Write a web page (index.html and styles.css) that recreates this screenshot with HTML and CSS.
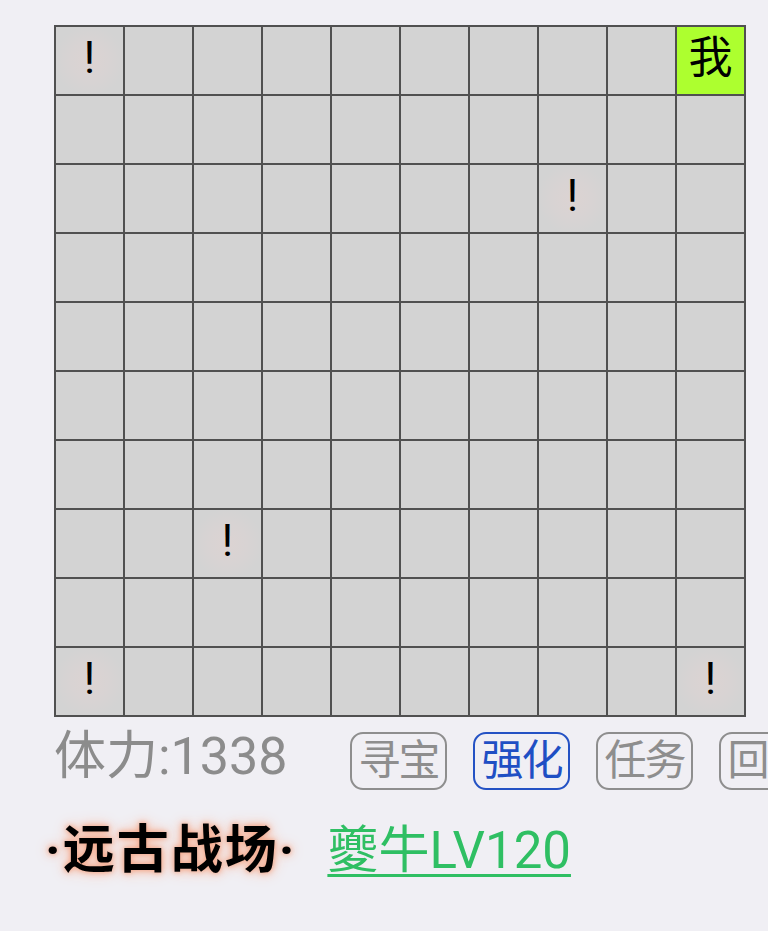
FILE: index.html
```html
<!DOCTYPE html>
<html lang="zh">
<head>
<meta charset="utf-8">
<title>远古战场</title>
<link rel="stylesheet" href="styles.css">
</head>
<body>
<div class="page">
  <div class="board">
    <div class="cell mark">!</div><div class="cell"></div><div class="cell"></div><div class="cell"></div><div class="cell"></div><div class="cell"></div><div class="cell"></div><div class="cell"></div><div class="cell"></div><div class="cell me">我</div>
    <div class="cell"></div><div class="cell"></div><div class="cell"></div><div class="cell"></div><div class="cell"></div><div class="cell"></div><div class="cell"></div><div class="cell"></div><div class="cell"></div><div class="cell"></div>
    <div class="cell"></div><div class="cell"></div><div class="cell"></div><div class="cell"></div><div class="cell"></div><div class="cell"></div><div class="cell"></div><div class="cell mark">!</div><div class="cell"></div><div class="cell"></div>
    <div class="cell"></div><div class="cell"></div><div class="cell"></div><div class="cell"></div><div class="cell"></div><div class="cell"></div><div class="cell"></div><div class="cell"></div><div class="cell"></div><div class="cell"></div>
    <div class="cell"></div><div class="cell"></div><div class="cell"></div><div class="cell"></div><div class="cell"></div><div class="cell"></div><div class="cell"></div><div class="cell"></div><div class="cell"></div><div class="cell"></div>
    <div class="cell"></div><div class="cell"></div><div class="cell"></div><div class="cell"></div><div class="cell"></div><div class="cell"></div><div class="cell"></div><div class="cell"></div><div class="cell"></div><div class="cell"></div>
    <div class="cell"></div><div class="cell"></div><div class="cell"></div><div class="cell"></div><div class="cell"></div><div class="cell"></div><div class="cell"></div><div class="cell"></div><div class="cell"></div><div class="cell"></div>
    <div class="cell"></div><div class="cell"></div><div class="cell mark">!</div><div class="cell"></div><div class="cell"></div><div class="cell"></div><div class="cell"></div><div class="cell"></div><div class="cell"></div><div class="cell"></div>
    <div class="cell"></div><div class="cell"></div><div class="cell"></div><div class="cell"></div><div class="cell"></div><div class="cell"></div><div class="cell"></div><div class="cell"></div><div class="cell"></div><div class="cell"></div>
    <div class="cell mark">!</div><div class="cell"></div><div class="cell"></div><div class="cell"></div><div class="cell"></div><div class="cell"></div><div class="cell"></div><div class="cell"></div><div class="cell"></div><div class="cell mark">!</div>
  </div>

  <div class="status">
    <span class="stamina">体力:1338</span>
    <div class="actions">
      <span class="btn">寻宝</span>
      <span class="btn active">强化</span>
      <span class="btn">任务</span>
      <span class="btn">回城</span>
    </div>
  </div>

  <div class="title-row">
    <span class="place">·远古战场·</span>
    <a class="boss" href="#">夔牛LV120</a>
  </div>
</div>
</body>
</html>
```

FILE: styles.css
```css
html, body {
  margin: 0;
  padding: 0;
  overflow: hidden;
  background: #f0eff4;
}

body {
  font-family: Roboto, "Noto Sans CJK SC", sans-serif;
  width: 768px;
  height: 931px;
}

.page {
  padding: 25px 0 0 54px;
}

.board {
  display: grid;
  grid-template-columns: repeat(10, 67px);
  grid-auto-rows: 67px;
  gap: 2px;
  padding: 2px;
  width: max-content;
  background: #505050;
}

.cell {
  box-sizing: border-box;
  background: #d3d3d3;
  display: flex;
  align-items: center;
  justify-content: center;
  padding-bottom: 6px;
  font-size: 44px;
  line-height: 1;
  color: #000;
}

.cell.mark {
  background: radial-gradient(circle at 50% 50%, #dcd3d2 0, #d8d3d3 40%, #d3d3d3 75%);
}

.cell.me {
  background: #adff2f;
}

.status {
  display: flex;
  align-items: flex-start;
  margin-top: 8px;
  white-space: nowrap;
}

.stamina {
  font-size: 52px;
  line-height: 58px;
  color: #8c8c8c;
  width: 296px;
  flex: none;
  margin-top: 3px;
}

.actions {
  display: flex;
  gap: 26px;
  margin-top: 7px;
  flex: none;
}

.btn {
  display: block;
  box-sizing: border-box;
  width: 97px;
  height: 58px;
  border: 2px solid #8e8e8e;
  border-radius: 13px;
  font-size: 42px;
  line-height: 54px;
  text-align: center;
  color: #8e8e8e;
  letter-spacing: -2px;
  flex: none;
}

.btn.active {
  border-color: #2452c4;
  color: #1f4fc4;
}

.title-row {
  display: flex;
  align-items: center;
  margin-top: 18px;
  white-space: nowrap;
}

.place {
  font-size: 52px;
  font-weight: 700;
  color: #000;
  margin-left: -9px;
  letter-spacing: 2px;
  text-shadow: 0 0 5px #f2a486, 0 0 10px #f5b59c, 0 0 16px #f8cbb9;
}

.boss {
  margin-left: 31px;
  font-size: 51px;
  color: #2fbf63;
  text-decoration: underline;
  text-decoration-thickness: 3px;
  text-underline-offset: 6px;
}
```
